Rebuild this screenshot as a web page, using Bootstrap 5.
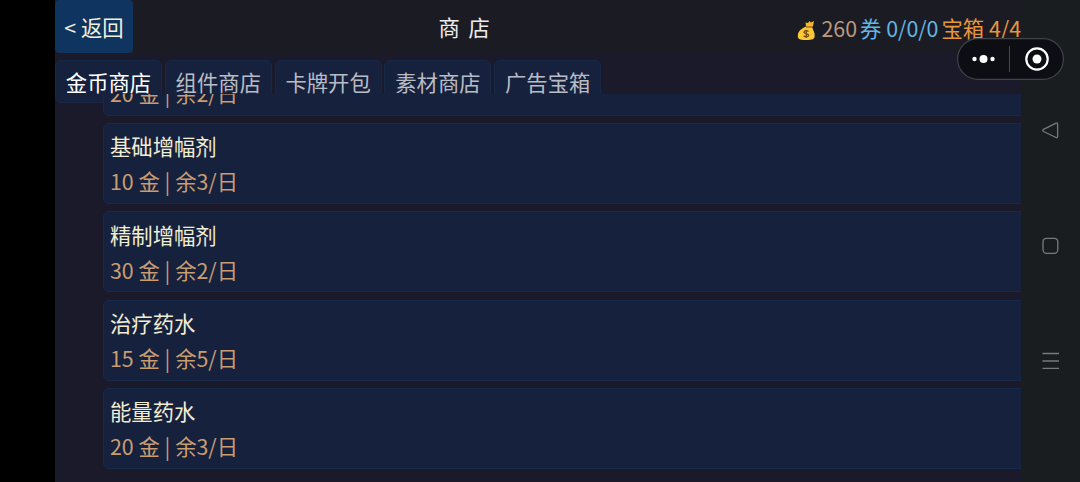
<!DOCTYPE html>
<html lang="zh-CN">
<head>
  <meta charset="UTF-8">
  <title>商店</title>
  <link href="https://cdn.jsdelivr.net/npm/bootstrap@5.3.0/dist/css/bootstrap.min.css" rel="stylesheet">
  <style>
    body { background: #000; color: #eee; font-family: "Noto Sans CJK SC", sans-serif; font-size: 21.35px; line-height: 32px; height: 482px; }
    .gutter { width: 55px; background: #000; }
    .game { background: #1a1a2b; min-width: 0; }
    .topbar { height: 53px; background: #1b1c23; }
    .btn-back { width: 78px; height: 53px; padding: 0; background: #0f3460; color: #f2f0d8; border: 0; border-radius: 4px; font-size: inherit; line-height: inherit; }
    .shop-title { left: 383.5px; top: 11px; color: #eee; word-spacing: 4px; }
    .wallet { padding-top: 2px; gap: 3px; white-space: nowrap; }
    .coins { color: #b99a80; }
    .tickets { color: #62b5e5; }
    .chests { color: #e8963a; }
    .shop-tabs { height: 43px; margin-top: 7px; gap: 2.8px; }
    .shop-tab { width: 107px; height: 43px; padding: 1px 0 0; font-size: inherit; line-height: inherit; }
    .shop-tab, .shop-tab.active { background: #16213e; border: 1px solid #172847; border-radius: 6px; color: #b9bcc4; }
    .shop-tab.active { color: #fff; }
    /* the list slides over the bottom of the tabs */
    .goods { margin: -9px 0 0 48px; }
    .goods-inner { width: 990px; margin-top: -59.5px; gap: 7.4px; }
    .goods-item { height: 81px; flex: none; padding: 6.3px 6px; background: #16213e; border: 1px solid #182a4b; border-radius: 6px; }
    .goods-name { color: #f2eed3; }
    .goods-price { color: #c99d70; margin-top: 3px; }
    .sysbar { width: 59px; background: #1a1d1f; }
    .capsule { left: 957px; top: 38px; }
  </style>
</head>
<body class="d-flex overflow-hidden position-relative">
  <div class="gutter flex-shrink-0"></div>

  <main class="game d-flex flex-column flex-grow-1 overflow-hidden">
    <header class="topbar d-flex justify-content-between flex-shrink-0 position-relative">
      <button type="button" class="btn btn-back">&lt; 返回</button>
      <div class="shop-title position-absolute">商 店</div>
      <div class="wallet d-flex align-items-center">
        <svg width="20" height="22" viewBox="0 0 20 22" class="mt-1">
          <path d="M9 7L8.500 3.500 11 4 12.500 2 14 3.500 17 2 16 7 14 9H10z" fill="#f5b82e"/>
          <path d="M9 7.500h6c1 4 3 6 2.700 9.500-.2 3-2 4-8.700 4S.8 20 .8 16.500C.8 12 5 9.500 9 7.500z" fill="#fcc934"/>
          <path d="M9 8h6" stroke="#a66b20" stroke-width="1.500"/>
          <path d="M11.500 12.500c-1-1.300-4.500-1.200-4.500.7 0 2 4.700 1 4.700 3.100 0 2-3.800 2-5 .5M9.300 10.700v8.300" fill="none" stroke="#78501d" stroke-width="1.400"/>
        </svg>
        <span class="coins ms-0">&#8202;260</span>
        <span class="tickets">券 0/0/0</span>
        <span class="chests">宝箱 4/4</span>
      </div>
    </header>

    <nav class="shop-tabs d-flex flex-shrink-0">
      <button type="button" class="btn shop-tab active">金币商店</button>
      <button type="button" class="btn shop-tab">组件商店</button>
      <button type="button" class="btn shop-tab">卡牌开包</button>
      <button type="button" class="btn shop-tab">素材商店</button>
      <button type="button" class="btn shop-tab">广告宝箱</button>
    </nav>

    <section class="goods flex-grow-1 overflow-hidden position-relative">
      <div class="goods-inner d-flex flex-column">
        <div class="goods-item">
          <div class="goods-name">&nbsp;</div>
          <div class="goods-price">20 金 | 余2/日</div>
        </div>
        <div class="goods-item">
          <div class="goods-name">基础增幅剂</div>
          <div class="goods-price">10 金 | 余3/日</div>
        </div>
        <div class="goods-item">
          <div class="goods-name">精制增幅剂</div>
          <div class="goods-price">30 金 | 余2/日</div>
        </div>
        <div class="goods-item">
          <div class="goods-name">治疗药水</div>
          <div class="goods-price">15 金 | 余5/日</div>
        </div>
        <div class="goods-item">
          <div class="goods-name">能量药水</div>
          <div class="goods-price">20 金 | 余3/日</div>
        </div>
      </div>
    </section>
  </main>

  <!-- System navigation -->
  <aside class="sysbar flex-shrink-0">
    <svg width="59" height="482" viewBox="0 0 59 482" fill="none" stroke="#777a7c" stroke-width="1.300" stroke-linejoin="round" class="d-block">
      <path d="M22.500 129.300L35 123.200Q36.600 122.600 36.600 124.200V136.500Q36.600 138.200 35 137.500L22.500 131.500Q21 130.400 22.500 129.300z"/>
      <rect x="22" y="238.300" width="14.800" height="15" rx="3.500"/>
      <path d="M21.500 353.500h16.500M21.500 361h16.500M21.500 368.300h16.500"/>
    </svg>
  </aside>

  <!-- Mini program menu -->
  <svg class="capsule position-absolute" width="107" height="42" viewBox="0 0 107 42">
    <rect x=".6" y=".6" width="105.800" height="40.800" rx="20.400" fill="#0d0e13" stroke="#424448" stroke-width="1.200"/>
    <path d="M52.500 8v26" stroke="#46484c"/>
    <g fill="#fff">
      <circle cx="17.500" cy="21" r="2.200"/>
      <circle cx="26.500" cy="21" r="4"/>
      <circle cx="35.500" cy="21" r="2.200"/>
      <circle cx="80" cy="21" r="4.500"/>
    </g>
    <circle cx="80" cy="21" r="10.700" fill="none" stroke="#fff" stroke-width="2.200"/>
  </svg>
  <script src="https://cdn.jsdelivr.net/npm/bootstrap@5.3.0/dist/js/bootstrap.bundle.min.js"></script>
</body>
</html>
